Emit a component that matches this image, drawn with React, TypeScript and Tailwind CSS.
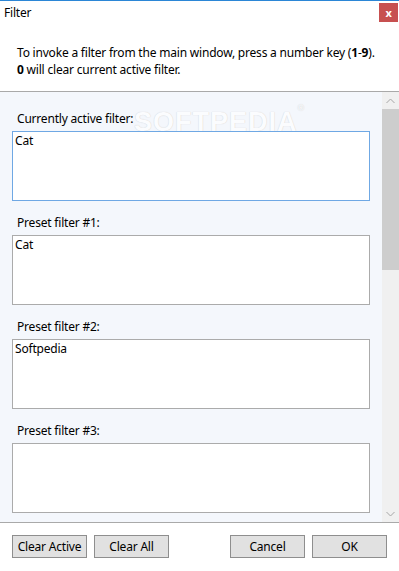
import React from 'react'

const font = "font-['Segoe_UI','Noto_Sans',sans-serif]"

const filters = [
  { label: 'Currently active filter:', value: 'Cat', active: true },
  { label: 'Preset filter #1:', value: 'Cat' },
  { label: 'Preset filter #2:', value: 'Softpedia' },
  { label: 'Preset filter #3:', value: '' },
]

function Chevron({ up }: { up?: boolean }) {
  return (
    <svg width="9" height="6" viewBox="0 0 9 6" fill="none">
      <path
        d={up ? 'M0.5 5 L4.5 1 L8.5 5' : 'M0.5 1 L4.5 5 L8.5 1'}
        stroke="#a6a6a6"
        strokeWidth="1"
      />
    </svg>
  )
}

function WinButton({ children }: { children: React.ReactNode }) {
  return (
    <button
      type="button"
      className="flex h-[23px] w-[75px] items-center justify-center border border-[#8e8e8e] bg-[#e1e1e1] text-[12px] leading-none text-black"
    >
      {children}
    </button>
  )
}

export default function App() {
  return (
    <div className={`${font} relative flex h-[571px] w-[399px] flex-col overflow-hidden bg-white text-[12px] tracking-[-0.2px] text-black`}>
      <div className="h-px bg-[#2b86d6]" />

      {/* title bar */}
      <div className="flex h-[24px] items-start justify-between">
        <span className="pl-[4px] pt-[4px] leading-[16px]">Filter</span>
        <div className="mr-px mt-[2px] flex h-[19px] w-[19px] items-center justify-center bg-[#c75050] text-[11px] font-bold leading-none text-white">
          x
        </div>
      </div>

      {/* hint */}
      <div className="h-[66px] pl-[17px] pt-[19px] leading-[17px]">
        <p>
          To invoke a filter from the main window, press a number key (<b>1</b>-<b>9</b>).
        </p>
        <p>
          <b>0</b> will clear current active filter.
        </p>
      </div>

      <div className="h-px bg-[#a9a9a9]" />

      {/* scroll panel */}
      <div className="relative flex h-[430px]">
        <div className="pointer-events-none absolute left-[134px] top-[10px] select-none font-['Liberation_Sans',sans-serif] text-[27px] font-bold tracking-[1px] text-[#fbfcfe] [text-shadow:0_0_1px_#c8c8c8]">
          SOFTPEDIA<span className="align-top text-[9px]">®</span>
        </div>

        <div className="flex flex-1 flex-col gap-[14px] overflow-hidden bg-[#f4f7fc] pl-[12px] pr-[12px] pt-[19px]">
          {filters.map((f) => (
            <div key={f.label} className="relative flex flex-col">
              <label className="mb-[4px] h-[16px] pl-[5px] leading-[16px]">{f.label}</label>
              <div
                className={`h-[70px] border bg-white px-[2px] pt-[1px] leading-[16px] ${
                  f.active ? 'border-[#6fa8e4]' : 'border-[#ababab]'
                }`}
              >
                {f.value}
              </div>
            </div>
          ))}
        </div>

        {/* scrollbar */}
        <div className="flex w-[17px] flex-col bg-[#f0f0f0]">
          <div className="flex h-[17px] items-center justify-center">
            <Chevron up />
          </div>
          <div className="h-[161px] bg-[#cdcdcd]" />
          <div className="flex-1" />
          <div className="flex h-[17px] items-center justify-center">
            <Chevron />
          </div>
        </div>
      </div>

      <div className="h-px bg-[#a9a9a9]" />

      {/* buttons */}
      <div className="flex items-start justify-between px-[12px] pt-[12px]">
        <div className="flex gap-[7px]">
          <WinButton>Clear Active</WinButton>
          <WinButton>Clear All</WinButton>
        </div>
        <div className="flex gap-[7px]">
          <WinButton>Cancel</WinButton>
          <WinButton>OK</WinButton>
        </div>
      </div>
    </div>
  )
}
